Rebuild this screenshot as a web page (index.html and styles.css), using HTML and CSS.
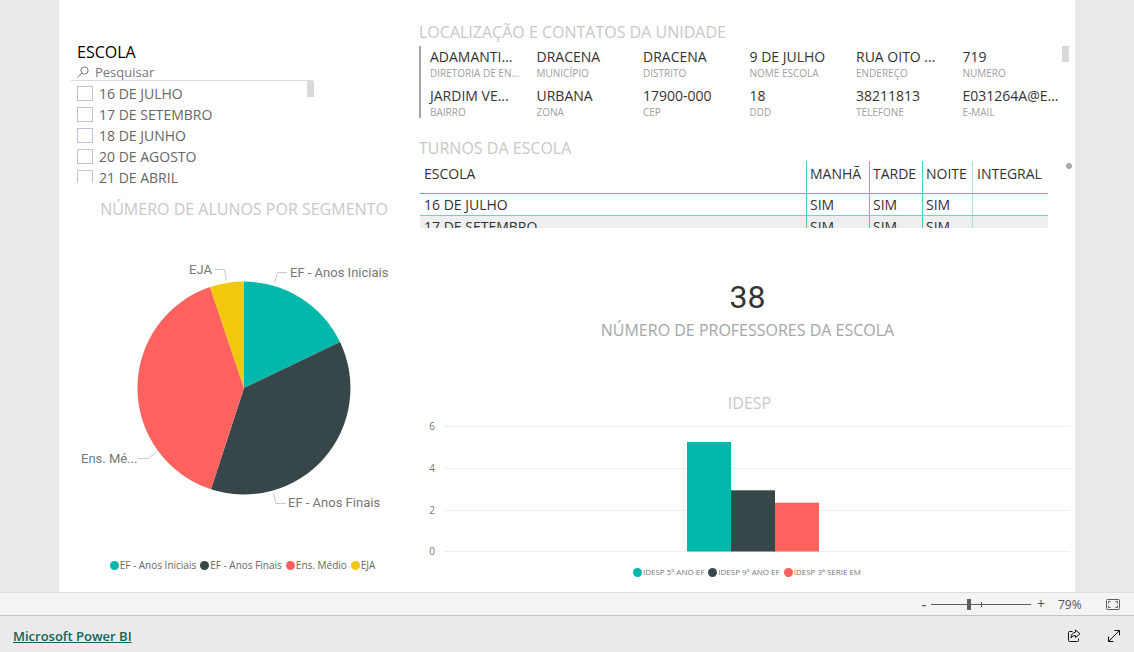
FILE: index.html
```html
<!DOCTYPE html>
<html lang="pt-BR">
<head>
<meta charset="utf-8">
<meta name="viewport" content="width=device-width, initial-scale=1">
<title>Microsoft Power BI</title>
<link rel="stylesheet" href="styles.css">
</head>
<body>
<main class="report">
  <div class="left">
    <section class="slicer">
      <h2 class="slicer-title">ESCOLA</h2>
      <label class="search">
        <svg class="search-icon" viewBox="0 0 12 12" aria-hidden="true"><circle cx="7.5" cy="4.5" r="3.6"/><path d="M5 7L.5 11.3"/></svg>
        <input class="search-input" type="text" placeholder="Pesquisar" aria-label="Pesquisar">
      </label>
      <div class="options">
        <div class="option-list">
          <label class="option"><input class="check" type="checkbox">16 DE JULHO</label>
          <label class="option"><input class="check" type="checkbox">17 DE SETEMBRO</label>
          <label class="option"><input class="check" type="checkbox">18 DE JUNHO</label>
          <label class="option"><input class="check" type="checkbox">20 DE AGOSTO</label>
          <label class="option"><input class="check" type="checkbox">21 DE ABRIL</label>
        </div>
        <div class="thumb"></div>
      </div>
    </section>
    <section class="segment">
      <h2 class="visual-title centered">NÚMERO DE ALUNOS POR SEGMENTO</h2>
      <svg class="pie" viewBox="0 0 334 280" role="img" aria-label="Número de alunos por segmento">
        <path class="teal" d="M173 148V41.500A106.500 106.500 0 0 1 269 102Z"/>
        <path class="dark" d="M173 148L269 102A106.500 106.500 0 0 1 140 249.300Z"/>
        <path class="red" d="M173 148L140 249.300A106.500 106.500 0 0 1 139 47.100Z"/>
        <path class="yellow" d="M173 148L139 47.100A106.500 106.500 0 0 1 173 41.500Z"/>
        <g class="leaders">
          <path d="M144 29.500H153.500L155.500 40.500"/>
          <path d="M203.500 42.500L206.500 32.500H216"/>
          <path d="M67 218.500H77L85 212.500"/>
          <path d="M202.500 253.500L205 263.500H215"/>
        </g>
        <g class="pie-labels">
          <text x="141" y="34" text-anchor="end">EJA</text>
          <text x="219" y="37">EF - Anos Iniciais</text>
          <text x="10" y="223">Ens. Mé...</text>
          <text x="217" y="267">EF - Anos Finais</text>
        </g>
      </svg>
      <ul class="legend">
        <li class="key"><span class="dot teal"></span>EF - Anos Iniciais</li>
        <li class="key"><span class="dot dark"></span>EF - Anos Finais</li>
        <li class="key"><span class="dot red"></span>Ens. Médio</li>
        <li class="key"><span class="dot yellow"></span>EJA</li>
      </ul>
    </section>
  </div>
  <div class="right">
    <section class="contacts">
      <h2 class="visual-title">LOCALIZAÇÃO E CONTATOS DA UNIDADE</h2>
      <div class="card">
        <dl class="fields">
          <div class="field"><dd>ADAMANTI...</dd><dt>DIRETORIA DE EN...</dt></div>
          <div class="field"><dd>DRACENA</dd><dt>MUNICÍPIO</dt></div>
          <div class="field"><dd>DRACENA</dd><dt>DISTRITO</dt></div>
          <div class="field"><dd>9 DE JULHO</dd><dt>NOME ESCOLA</dt></div>
          <div class="field"><dd>RUA OITO ...</dd><dt>ENDEREÇO</dt></div>
          <div class="field"><dd>719</dd><dt>NUMERO</dt></div>
          <div class="field"><dd>JARDIM VE...</dd><dt>BAIRRO</dt></div>
          <div class="field"><dd>URBANA</dd><dt>ZONA</dt></div>
          <div class="field"><dd>17900-000</dd><dt>CEP</dt></div>
          <div class="field"><dd>18</dd><dt>DDD</dt></div>
          <div class="field"><dd>38211813</dd><dt>TELEFONE</dt></div>
          <div class="field"><dd>E031264A@E...</dd><dt>E-MAIL</dt></div>
        </dl>
        <div class="thumb card-thumb"></div>
      </div>
    </section>
    <section class="shifts">
      <h2 class="visual-title">TURNOS DA ESCOLA</h2>
      <div class="shift-body">
        <div class="table-clip">
          <table class="shift-table">
            <thead><tr><th class="school">ESCOLA</th><th class="c1">MANHÃ</th><th class="c2">TARDE</th><th class="c3">NOITE</th><th class="c4">INTEGRAL</th></tr></thead>
            <tbody>
              <tr><td>16 DE JULHO</td><td>SIM</td><td>SIM</td><td>SIM</td><td></td></tr>
              <tr><td>17 DE SETEMBRO</td><td>SIM</td><td>SIM</td><td>SIM</td><td></td></tr>
            </tbody>
          </table>
        </div>
        <span class="scroll-dot"></span>
      </div>
    </section>
    <section class="teachers">
      <p class="count">38</p>
      <p class="count-label">NÚMERO DE PROFESSORES DA ESCOLA</p>
    </section>
    <section class="idesp">
      <h2 class="visual-title centered">IDESP</h2>
      <svg class="bars" viewBox="0 0 652 146" role="img" aria-label="IDESP">
        <path class="gridlines" d="M25 10.500H651M25 52.500H651M25 94.500H651M25 135.500H651"/>
        <g class="axis">
          <text x="16" y="14" text-anchor="end">6</text>
          <text x="16" y="56" text-anchor="end">4</text>
          <text x="16" y="98" text-anchor="end">2</text>
          <text x="16" y="139" text-anchor="end">0</text>
        </g>
        <rect class="teal" x="268" y="26" width="44" height="109.500"/>
        <rect class="dark" x="312" y="74.300" width="44" height="61.200"/>
        <rect class="red" x="356" y="86.700" width="44" height="48.800"/>
      </svg>
      <ul class="legend small">
        <li class="key"><span class="dot teal"></span>IDESP 5º ANO EF</li>
        <li class="key"><span class="dot dark"></span>IDESP 9º ANO EF</li>
        <li class="key"><span class="dot red"></span>IDESP 3ª SERIE EM</li>
      </ul>
    </section>
  </div>
</main>
<div class="zoombar">
  <button class="zoom-step" type="button" aria-label="Reduzir">-</button>
  <div class="zoom-track">
    <input class="zoom-range" type="range" min="0" max="100" value="38" aria-label="Zoom">
    <span class="zoom-tick"></span>
  </div>
  <button class="zoom-step zoom-in" type="button" aria-label="Ampliar">+</button>
  <span class="zoom-value">79%</span>
  <button class="icon-button" type="button" aria-label="Ajustar à página">
    <svg class="fit-icon" viewBox="0 0 14 11"><rect x=".5" y=".5" width="13" height="10" rx="1"/><path d="M4.500 2.500H2.500V4.500M9.500 2.500H11.500V4.500M2.500 6.500V8.500H4.500M11.500 6.500V8.500H9.500"/></svg>
  </button>
</div>
<footer class="footer">
  <a class="brand" href="#">Microsoft Power BI</a>
  <div class="actions">
    <button class="icon-button" type="button" aria-label="Compartilhar">
      <svg class="share-icon" viewBox="0 0 14 14"><path d="M5.500 2.500H2.500Q1.500 2.500 1.500 3.500V11.500Q1.500 12.500 2.500 12.500H10.500Q11.500 12.500 11.500 11.500V9.500"/><path d="M8.500 1L13 4.800L8.500 8.600V6.500Q5.500 6.300 4 9Q4.200 3.800 8.500 3.200Z"/></svg>
    </button>
    <button class="icon-button" type="button" aria-label="Tela inteira">
      <svg class="full-icon" viewBox="0 0 14 14"><path d="M1.500 12.500L12.500 1.500M7.500 1.500H12.500V6.500M1.500 7.500V12.500H6.500"/></svg>
    </button>
  </div>
</footer>
</body>
</html>
```
FILE: styles.css
```css
* { box-sizing: border-box; }

body {
  margin: 0;
  min-height: 100vh;
  display: flex;
  flex-direction: column;
  background: #eaeaea;
  color: #333;
  font-family: "Open Sans", "Noto Sans", sans-serif;
  font-weight: 400;
}

h2, p, dl, dd, ul { margin: 0; padding: 0; }
h2 { font-weight: 400; }
button { border: 0; background: none; padding: 0; font: inherit; color: inherit; }

.report {
  flex: 1;
  display: grid;
  grid-template-columns: minmax(0, 334fr) minmax(0, 652fr);
  gap: 14px;
  align-items: start;
  margin: 0 59px;
  padding: 0 4px 0 12px;
  background: #fff;
}

.teal { fill: #01b8aa; background: #01b8aa; }
.dark { fill: #374649; background: #374649; }
.red { fill: #fd625e; background: #fd625e; }
.yellow { fill: #f2c80f; background: #f2c80f; }

.visual-title {
  font-size: 16px;
  line-height: 24px;
  color: #c8c8c8;
  white-space: nowrap;
}
.centered { text-align: center; }

/* School slicer */
.slicer { padding-top: 40px; }
.slicer-title {
  padding-left: 6px;
  font-size: 16px;
  line-height: 24px;
  color: #000;
}
.search {
  display: flex;
  align-items: center;
  gap: 6px;
  width: 242px;
  height: 17px;
  padding-left: 6px;
  border-bottom: 1px solid #dcdcdc;
  overflow: hidden;
}
.search-icon { width: 12px; height: 12px; fill: none; stroke: #777; }
.search-input {
  flex: 1;
  min-width: 0;
  height: 18px;
  padding: 0;
  border: 0;
  background: none;
  font: inherit;
  font-size: 13px;
  color: #777;
}
.search-input::placeholder { color: #777; opacity: 1; }
.options {
  display: flex;
  justify-content: space-between;
  width: 243px;
  height: 102px;
  overflow: hidden;
}
.option-list { padding: 2px 0 0 6px; }
.option {
  display: flex;
  align-items: center;
  gap: 6px;
  height: 21px;
  font-size: 14px;
  color: #666;
}
.check {
  appearance: none;
  width: 16px;
  height: 15px;
  margin: 0;
  border: 1px solid #bcc4d8;
  background: #fff;
}
.thumb { width: 7px; height: 16px; background: #d9d9d9; }

/* Students per segment */
.segment { padding-top: 14px; }
.segment .visual-title { padding-left: 12px; }
.pie { display: block; width: 100%; margin-top: 19px; }
.leaders { fill: none; stroke: #c8c8c8; }
.pie-labels { font-family: Roboto, sans-serif; font-size: 13px; font-weight: 400; fill: #777; }
.legend {
  display: flex;
  justify-content: center;
  gap: 4px;
  padding-left: 9px;
  margin-top: 37px;
  list-style: none;
  font-size: 10px;
  line-height: 16px;
  color: #666;
  white-space: nowrap;
}
.key { display: flex; align-items: center; gap: 1px; }
.dot { width: 9px; height: 9px; border-radius: 50%; }

/* Contact card */
.contacts { padding-top: 20px; }
.card { display: flex; margin-top: 2px; border-left: 2px solid #a6a6a6; }
.fields {
  flex: 1;
  display: grid;
  grid-template-columns: repeat(6, minmax(0, 1fr));
  padding-left: 9px;
  margin-right: -7px;
}
.field { display: flex; flex-direction: column; height: 39px; white-space: nowrap; }
.field:nth-child(n+7) { height: 33px; }
.field dd { font-size: 14px; line-height: 21px; color: #333; }
.field dt { font-size: 10px; line-height: 12px; color: #a0a0a0; }
.card-thumb { margin-right: 2px; }

/* Shift table */
.shifts { padding-top: 18px; }
.shift-body { display: flex; justify-content: space-between; padding: 1px 0 0 1px; }
.table-clip { flex: 1; height: 67px; margin-right: 18px; overflow: hidden; }
.shift-table {
  width: 100%;
  table-layout: fixed;
  border-collapse: separate;
  border-spacing: 0;
  font-size: 14px;
  color: #333;
}
.shift-table th { height: 33px; padding: 3px 4px 0; font-weight: 400; text-align: left; vertical-align: top; border-bottom: 1px solid #47c1b7; }
.shift-table td { height: 22px; padding: 1px 4px 0; line-height: 20px; border-bottom: 1px solid #6fd3ca; }
.shift-table th + th, .shift-table td + td { border-left: 1px solid #4fcabf; padding: 3px 0 0 3px; }
.shift-table td + td { padding-top: 1px; }
.shift-table tbody tr:nth-child(even) { background: #eee; }
.c1 { width: 63px; }
.c2 { width: 53px; }
.c3 { width: 50px; }
.c4 { width: 76px; }
.shift-table th.c4, .shift-table td:last-child { border-left-color: #a5e2dc; }
.shift-table th.c4 { padding-left: 4px; }
.scroll-dot { width: 6px; height: 6px; margin: 2px -1px 0 0; border-radius: 50%; background: #aaa; }

/* Teacher count */
.teachers { padding: 48px 0 0 5px; text-align: center; }
.count { font-family: Roboto, sans-serif; font-weight: 400; font-size: 32px; line-height: 42px; }
.count-label { font-size: 16px; line-height: 24px; color: #a6a6a6; }

/* IDESP */
.idesp { padding-top: 49px; }
.idesp .visual-title { padding-left: 9px; }
.bars { display: block; width: 100%; margin-top: 1px; }
.gridlines { stroke: #eee; }
.axis { font-size: 10px; fill: #777; }
.legend.small { margin-top: 2px; padding-left: 4px; font-size: 8px; color: #777; }

/* Zoom bar */
.zoombar {
  display: flex;
  align-items: center;
  justify-content: flex-end;
  height: 24px;
  padding-right: 14px;
  border-top: 1px solid #dcdcdc;
  border-bottom: 1px solid #c4c4c4;
  background: #f4f4f4;
  color: #555;
}
.zoom-step { width: 14px; font-weight: 600; font-size: 14px; line-height: 20px; }
.zoom-in { width: 20px; font-weight: 400; }
.zoom-track { position: relative; display: flex; align-items: center; width: 100px; height: 11px; }
.zoom-range {
  appearance: none;
  width: 100%;
  height: 11px;
  margin: 0;
  background: linear-gradient(#605e5c, #605e5c) center / 100% 1px no-repeat;
}
.zoom-range::-webkit-slider-thumb { appearance: none; width: 4px; height: 11px; background: #605e5c; }
.zoom-tick { position: absolute; left: 50px; top: 3px; width: 1px; height: 5px; background: #605e5c; }
.zoom-value { width: 34px; padding-left: 7px; font-size: 12px; }
.icon-button { display: flex; }
.fit-icon { width: 14px; height: 11px; margin-left: 21px; fill: none; stroke: #605e5c; }

/* Footer */
.footer {
  display: flex;
  align-items: center;
  justify-content: space-between;
  height: 36px;
  padding: 4px 13px 0;
}
.brand { color: #116457; font-size: 13px; font-weight: 600; line-height: 20px; }
.actions { display: flex; gap: 26px; }
.share-icon, .full-icon { width: 14px; height: 14px; fill: none; stroke: #111; }
```
